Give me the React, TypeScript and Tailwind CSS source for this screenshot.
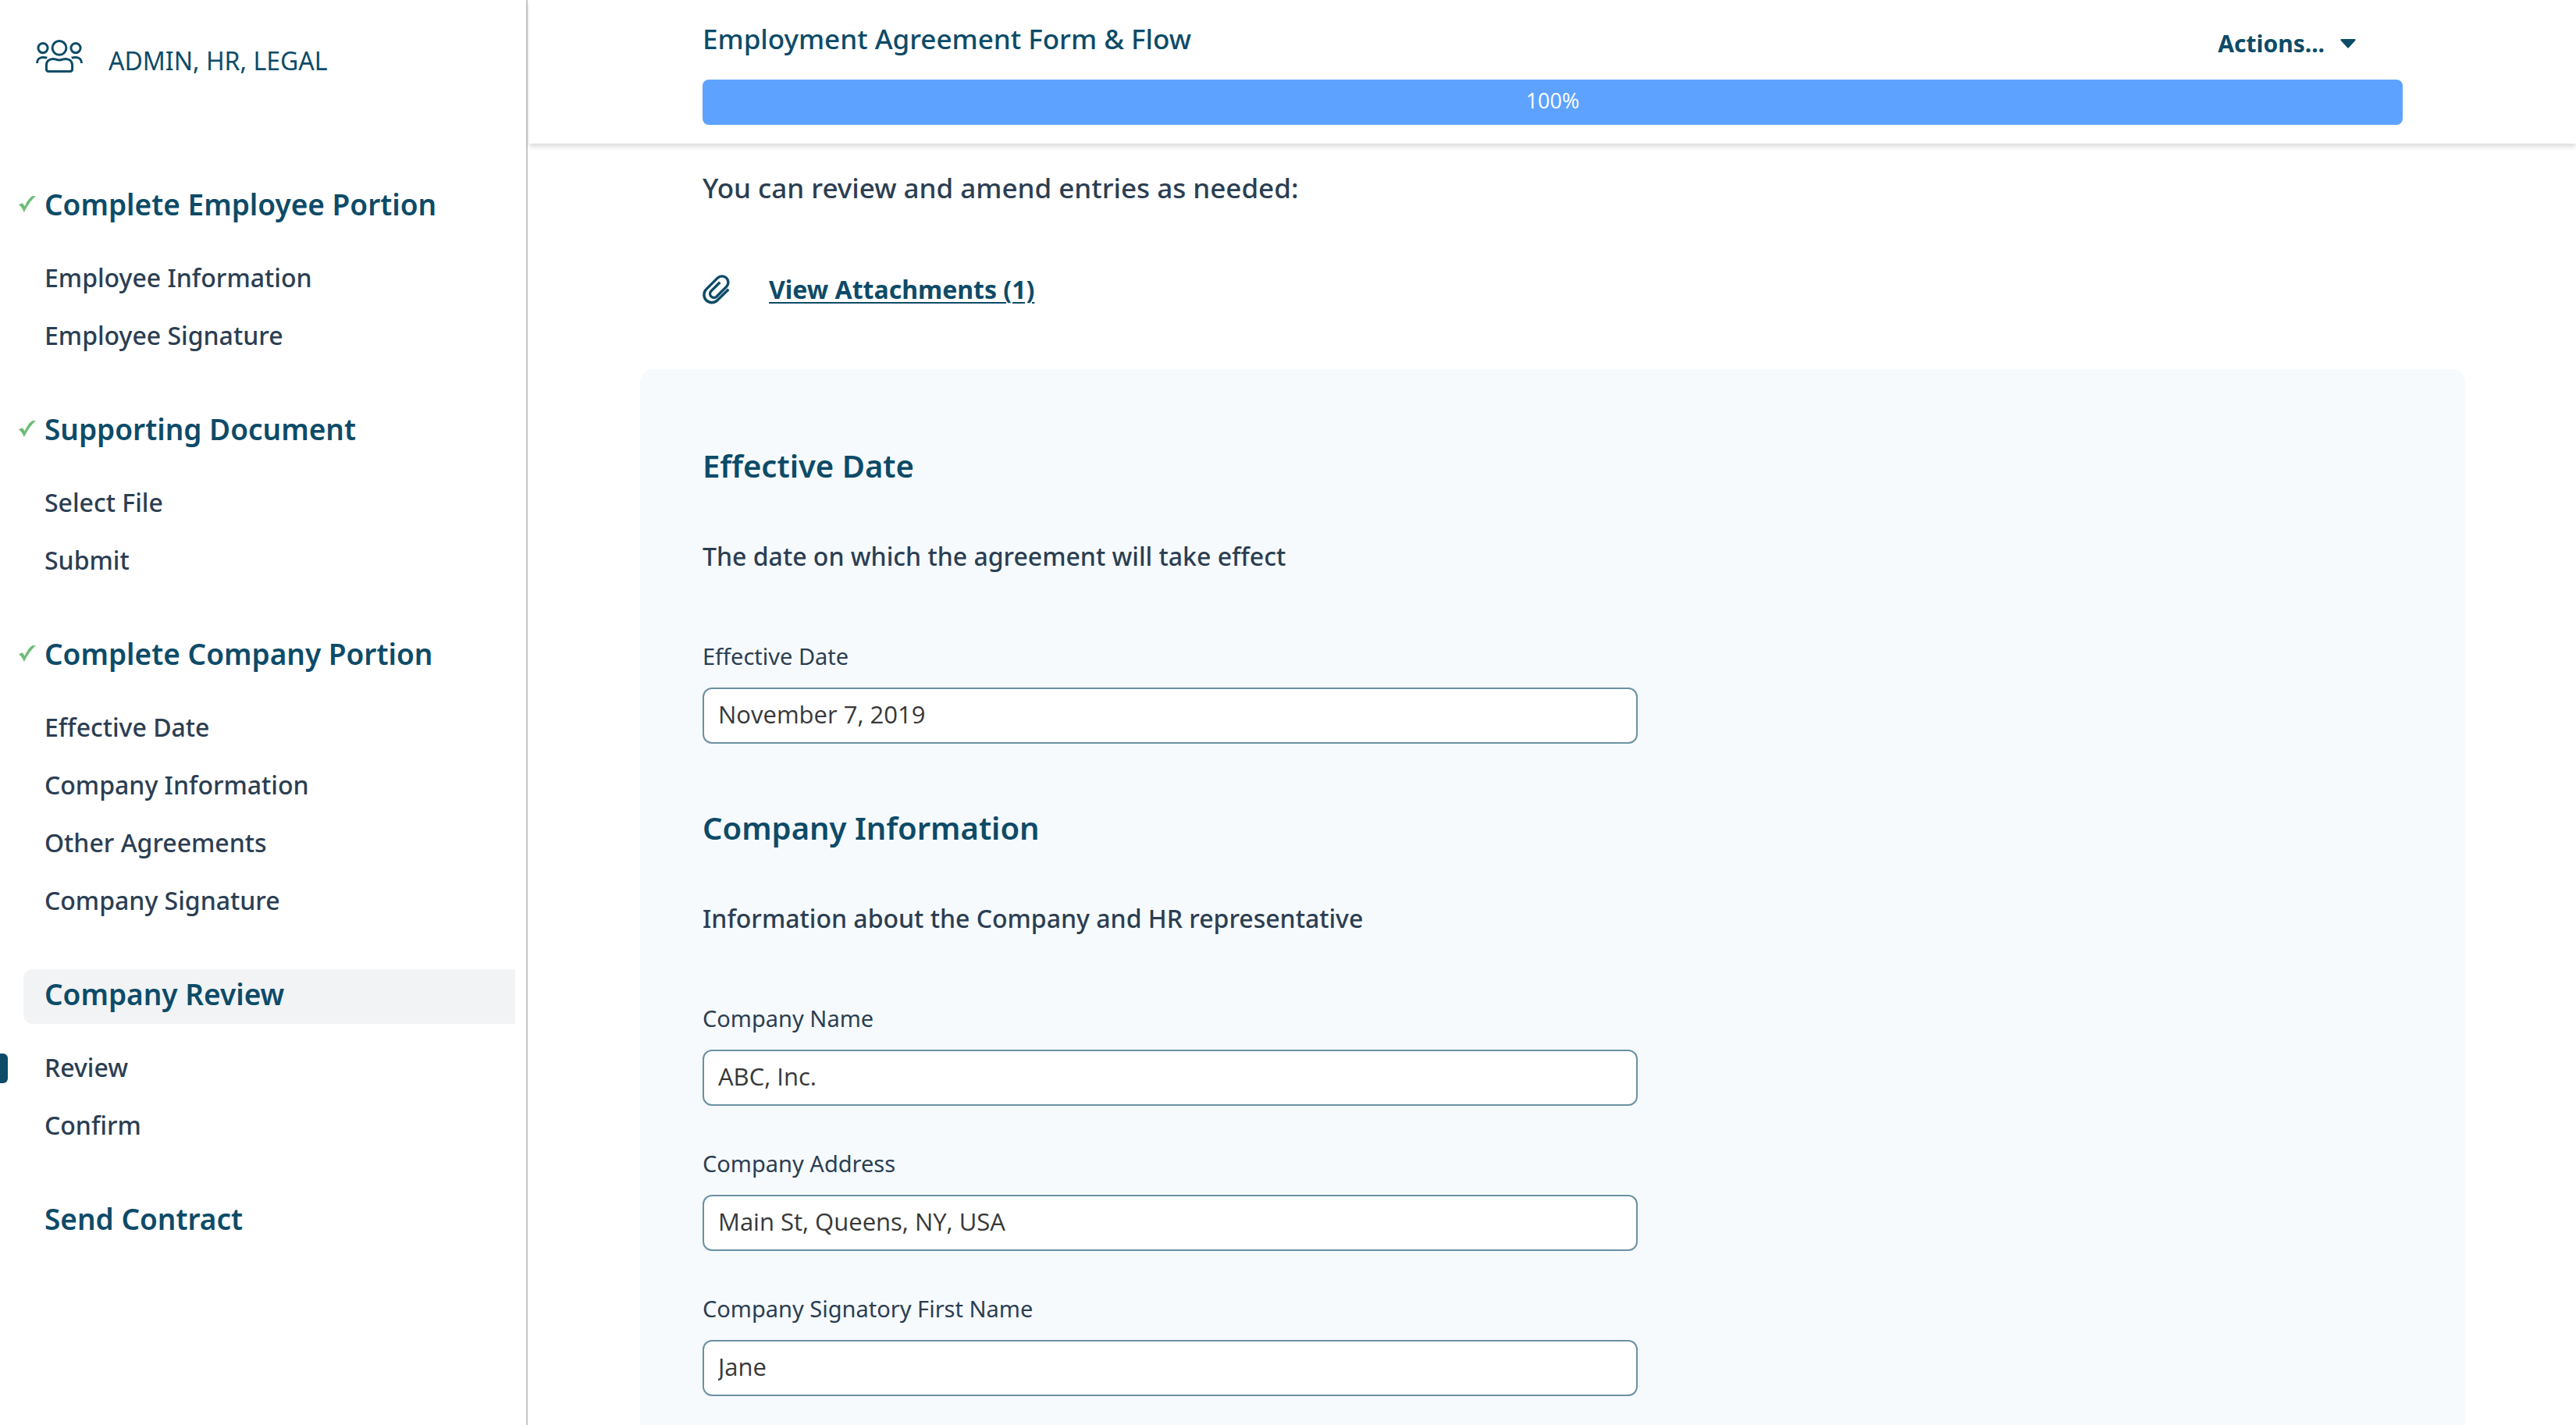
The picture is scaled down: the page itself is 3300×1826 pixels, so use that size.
import React from "react";

type Section = {
  title: string;
  done?: boolean;
  current?: boolean;
  items: { label: string; current?: boolean }[];
};

const sections: Section[] = [
  {
    title: "Complete Employee Portion",
    done: true,
    items: [{ label: "Employee Information" }, { label: "Employee Signature" }],
  },
  {
    title: "Supporting Document",
    done: true,
    items: [{ label: "Select File" }, { label: "Submit" }],
  },
  {
    title: "Complete Company Portion",
    done: true,
    items: [
      { label: "Effective Date" },
      { label: "Company Information" },
      { label: "Other Agreements" },
      { label: "Company Signature" },
    ],
  },
  {
    title: "Company Review",
    current: true,
    items: [{ label: "Review", current: true }, { label: "Confirm" }],
  },
  { title: "Send Contract", items: [] },
];

const forms = [
  {
    title: "Effective Date",
    description: "The date on which the agreement will take effect",
    fields: [{ id: "effective-date", label: "Effective Date", value: "November 7, 2019" }],
  },
  {
    title: "Company Information",
    description: "Information about the Company and HR representative",
    fields: [
      { id: "company-name", label: "Company Name", value: "ABC, Inc." },
      { id: "company-address", label: "Company Address", value: "Main St, Queens, NY, USA" },
      { id: "signatory-first-name", label: "Company Signatory First Name", value: "Jane" },
    ],
  },
];

function PeopleIcon() {
  return (
    <svg
      className="h-[42px] w-[60px] shrink-0"
      viewBox="0 0 60 42"
      fill="none"
      stroke="currentColor"
      strokeWidth="3"
      aria-hidden="true"
    >
      <circle cx="30" cy="10.4" r="8.9" />
      <circle cx="9" cy="10.6" r="6.1" />
      <circle cx="51" cy="10.6" r="6.1" />
      <path d="M13.4 33C13.4 27.500 17 24.400 22 24.400C25 24.400 26.500 26 30 26C33.500 26 35 24.400 38 24.400C43 24.400 46.600 27.500 46.600 33V37.600Q46.600 40.500 43.700 40.500H16.300Q13.400 40.500 13.400 37.600Z" />
      <path d="M1.500 30C1.500 25.500 4.500 22.500 8.500 22.500C10.500 22.500 12.500 22.600 14.300 23.200" />
      <path d="M58.500 30C58.500 25.500 55.500 22.500 51.500 22.500C49.500 22.500 47.500 22.600 45.700 23.200" />
    </svg>
  );
}

function CheckIcon() {
  return (
    <svg
      className="absolute -left-[6px] top-5 h-[23px] w-[22px] text-[#6dbd78]"
      viewBox="0 0 22 23"
      fill="currentColor"
      aria-hidden="true"
    >
      <path d="M0 12.300L4.500 10.200Q6.300 11.500 7.600 14.500Q11.500 5 17.200 1.200L22 1Q13 9 6.800 22.300Q4 15 0 12.300Z" />
    </svg>
  );
}

function PaperclipIcon() {
  return (
    <svg
      className="h-[40px] w-[36px] shrink-0"
      viewBox="0 0 36 40"
      fill="none"
      stroke="currentColor"
      strokeWidth="3.4"
      aria-hidden="true"
    >
      <path d="M33.300 19.700L19 33.800A10 10 0 0 1 4.800 19.600L19.500 4.900A8 8 0 0 1 30.800 16.200L17.800 29.200A5 5 0 0 1 10.800 22.100L22.300 10.700" />
    </svg>
  );
}

function Sidebar() {
  return (
    <aside className="w-[676px] shrink-0 border-r-2 border-[#c6c6c6] pt-[51px]">
      <div className="flex items-start gap-[33px] pl-[46px] text-[#0d4b68]">
        <PeopleIcon />
        <span className="text-[32px] leading-[54px]">ADMIN, HR, LEGAL</span>
      </div>
      <nav className="mt-[125px] flex flex-col gap-[51px]">
        {sections.map((s) => (
          <section key={s.title}>
            <h2
              className={
                "relative ml-[30px] mr-[14px] rounded-l-xl pb-[6px] pl-[27px] text-[37px] font-semibold leading-[64px] text-[#0d4b68] " +
                (s.current ? "bg-[#f1f3f5]" : "")
              }
            >
              {s.done && <CheckIcon />}
              {s.title}
            </h2>
            {s.items.length > 0 && (
              <ul className="mt-[19px]">
                {s.items.map((i) => (
                  <li key={i.label} className="relative pl-[57px] text-[32px] leading-[74px]">
                    {i.current && (
                      <span className="absolute left-0 top-[19px] h-[38px] w-[10px] rounded-r-md bg-[#0d4b68]" />
                    )}
                    <a href="#" className="font-medium" aria-current={i.current ? "step" : undefined}>
                      {i.label}
                    </a>
                  </li>
                ))}
              </ul>
            )}
          </section>
        ))}
      </nav>
    </aside>
  );
}

function Header() {
  return (
    <header className="pb-6 pt-[30px] shadow-[0_4px_6px_rgba(0,0,0,0.14)]">
      <div className="mx-auto max-w-[2338px] px-20">
        <div className="mb-[26px] flex h-[46px] justify-between text-[#0d4b68]">
          <h1 className="text-[35px] font-medium leading-[40px]">Employment Agreement Form &amp; Flow</h1>
          <button type="button" className="mr-[60px] flex items-center gap-5 self-end text-[30px] font-bold leading-[40px]">
            Actions...
            <svg className="h-[12px] w-[20px]" viewBox="0 0 20 12" fill="currentColor" aria-hidden="true">
              <path d="M1.500 0H18.500Q20.300 0.400 19.200 1.900L11 11Q10 12 9 11L0.800 1.900Q-0.300 0.400 1.500 0Z" />
            </svg>
          </button>
        </div>
        <div
          role="progressbar"
          aria-valuenow={100}
          aria-valuemin={0}
          aria-valuemax={100}
          aria-label="Progress"
          className="rounded-lg bg-[#5ea2ff] pb-[4px] text-center font-['Open_Sans','Noto_Sans',sans-serif] text-[27px] leading-[54px] text-white"
        >
          100%
        </div>
      </div>
    </header>
  );
}

export default function App() {
  return (
    <div className="flex min-h-screen bg-white font-['Noto_Sans',sans-serif] text-[#2b3e52]">
      <Sidebar />
      <div className="flex min-w-0 flex-1 flex-col pl-0.5">
        <Header />
        <main className="mx-auto flex w-full max-w-[2338px] flex-1 flex-col pt-[33px]">
          <p className="px-20 text-[35px] font-medium leading-[48px]">
            You can review and amend entries as needed:
          </p>
          <div className="mt-[82px] flex items-center gap-[49px] px-20 text-[#0d4b68]">
            <PaperclipIcon />
            <a href="#" className="text-[32px] font-bold leading-[48px] underline decoration-2 underline-offset-4">
              View Attachments (1)
            </a>
          </div>
          <form className="mt-[78px] flex flex-1 flex-col gap-20 rounded-t-2xl bg-[#f6fafd] px-20 pb-9 pt-24">
            {forms.map((f) => (
              <section key={f.title}>
                <h2 className="text-[40px] font-semibold leading-[56px] text-[#0d4b68]">{f.title}</h2>
                <p className="mt-16 text-[32px] font-medium leading-[48px]">{f.description}</p>
                <div className="mt-[84px] flex flex-col gap-[54px]">
                  {f.fields.map((x) => (
                    <div key={x.id}>
                      <label htmlFor={x.id} className="block text-[29px] leading-[40px]">
                        {x.label}
                      </label>
                      <input
                        id={x.id}
                        type="text"
                        defaultValue={x.value}
                        className="mt-5 block h-[72px] w-[55%] rounded-xl border-2 border-[#6b91a3] bg-white px-[18px] pb-1 font-['Open_Sans','Noto_Sans',sans-serif] text-[31px] text-[#383838]"
                      />
                    </div>
                  ))}
                </div>
              </section>
            ))}
          </form>
        </main>
      </div>
    </div>
  );
}
